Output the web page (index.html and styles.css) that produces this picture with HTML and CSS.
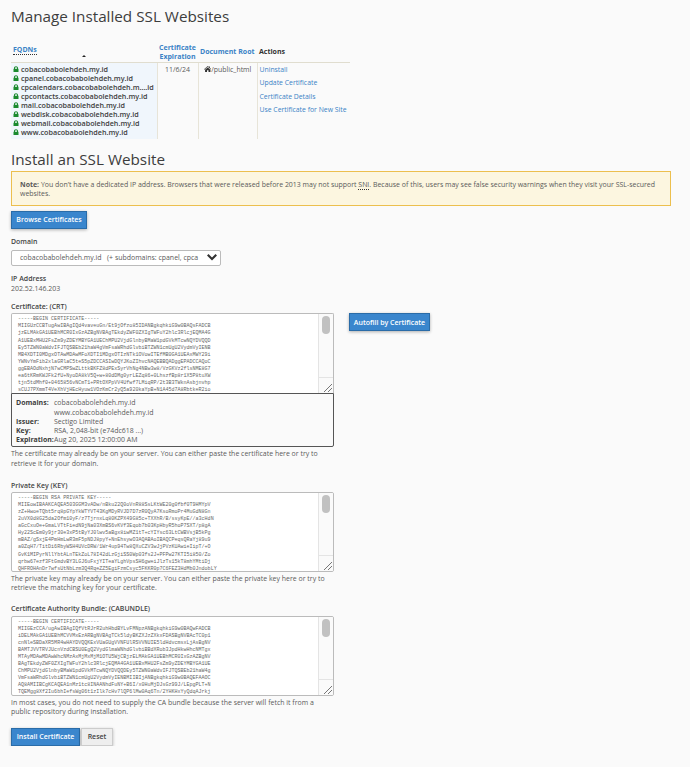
FILE: index.html
```html
<!DOCTYPE html>
<html>
  <head>
    <meta charset="utf-8">
    <title>Manage SSL Websites</title>
    <link rel="stylesheet" href="styles.css">
  </head>
  <body>
    <h1 class="title-top">Manage Installed SSL Websites</h1>
    <table class="sites">
      <thead>
        <tr>
          <th class="col-fqdn"><a class="abbr">FQDNs</a><svg class="sort" viewBox="0 0 6 3"><path d="M0 3L3 0L6 3Z"/></svg></th>
          <th class="col-exp"><a>Certificate Expiration</a></th>
          <th class="col-root"><a>Document Root</a></th>
          <th class="col-act">Actions</th>
        </tr>
      </thead>
      <tbody>
        <tr>
          <td class="fqdns">
            <div><svg class="lock" viewBox="0 0 12 12"><path d="M2 5V3.6C2 1.5 3.7 0 6 0s4 1.5 4 3.6V5h1v7H1V5zM4 5h4V3.6C8 2.6 7.1 2 6 2s-2 .6-2 1.6z"/></svg>cobacobabolehdeh.my.id</div>
            <div><svg class="lock" viewBox="0 0 12 12"><path d="M2 5V3.6C2 1.5 3.7 0 6 0s4 1.5 4 3.6V5h1v7H1V5zM4 5h4V3.6C8 2.6 7.1 2 6 2s-2 .6-2 1.6z"/></svg>cpanel.cobacobabolehdeh.my.id</div>
            <div><svg class="lock" viewBox="0 0 12 12"><path d="M2 5V3.6C2 1.5 3.7 0 6 0s4 1.5 4 3.6V5h1v7H1V5zM4 5h4V3.6C8 2.6 7.1 2 6 2s-2 .6-2 1.6z"/></svg>cpcalendars.cobacobabolehdeh.m….id</div>
            <div><svg class="lock" viewBox="0 0 12 12"><path d="M2 5V3.6C2 1.5 3.7 0 6 0s4 1.5 4 3.6V5h1v7H1V5zM4 5h4V3.6C8 2.6 7.1 2 6 2s-2 .6-2 1.6z"/></svg>cpcontacts.cobacobabolehdeh.my.id</div>
            <div><svg class="lock" viewBox="0 0 12 12"><path d="M2 5V3.6C2 1.5 3.7 0 6 0s4 1.5 4 3.6V5h1v7H1V5zM4 5h4V3.6C8 2.6 7.1 2 6 2s-2 .6-2 1.6z"/></svg>mail.cobacobabolehdeh.my.id</div>
            <div><svg class="lock" viewBox="0 0 12 12"><path d="M2 5V3.6C2 1.5 3.7 0 6 0s4 1.5 4 3.6V5h1v7H1V5zM4 5h4V3.6C8 2.6 7.1 2 6 2s-2 .6-2 1.6z"/></svg>webdisk.cobacobabolehdeh.my.id</div>
            <div><svg class="lock" viewBox="0 0 12 12"><path d="M2 5V3.6C2 1.5 3.7 0 6 0s4 1.5 4 3.6V5h1v7H1V5zM4 5h4V3.6C8 2.6 7.1 2 6 2s-2 .6-2 1.6z"/></svg>webmail.cobacobabolehdeh.my.id</div>
            <div><svg class="lock" viewBox="0 0 12 12"><path d="M2 5V3.6C2 1.5 3.7 0 6 0s4 1.5 4 3.6V5h1v7H1V5zM4 5h4V3.6C8 2.6 7.1 2 6 2s-2 .6-2 1.6z"/></svg>www.cobacobabolehdeh.my.id</div>
          </td>
          <td class="expiry">11/6/24</td>
          <td class="docroot"><svg class="home" viewBox="0 0 14 11"><path d="M7 0L9 1.7V.8h2v2.6L14 6l-.7.8L7 1.5.7 6.8 0 6zM7 2.6l5 4.2V11H8.4V7.6H5.6V11H2V6.8z"/></svg>/public_html</td>
          <td class="actions">
            <a>Uninstall</a>
            <a>Update Certificate</a>
            <a>Certificate Details</a>
            <a>Use Certificate for New Site</a>
          </td>
        </tr>
      </tbody>
    </table>

    <h1 class="title-install">Install an SSL Website</h1>
    <div class="note"><b>Note:</b> You don’t have a dedicated IP address. Browsers that were released before 2013 may not support <span class="abbr">SNI</span>. Because of this, users may see false security warnings when they visit your SSL-secured websites.</div>
    <button class="btn btn-browse">Browse Certificates</button>

    <label class="lbl lbl-domain">Domain</label>
    <div class="select">
      <span class="select-text">cobacobabolehdeh.my.id&nbsp;&nbsp;&nbsp;(+ subdomains: cpanel, cpca</span>
      <svg class="chevron" viewBox="0 0 10 7"><path d="M0 1.6L1.5 0L5 3.6L8.5 0L10 1.6L5 6.6Z"/></svg>
    </div>

    <label class="lbl lbl-ip">IP Address</label>
    <div class="ip">202.52.146.203</div>

    <label class="lbl lbl-crt">Certificate: (CRT)</label>
    <div class="cert-row">
      <div class="cert-col">
        <div class="area area-joined">
          <textarea class="area-text" readonly>-----BEGIN CERTIFICATE-----
MIIGUzCCBTugAwIBAgIQd4vaveuGn/Et9jOfzo85IDANBgkqhkiG9w0BAQsFADCB
jzELMAkGA1UEBhMCR0IxGzAZBgNVBAgTEkdyZWF0ZXIgTWFuY2hlc3RlcjEQMA4G
A1UEBxMHU2FsZm9yZDEYMBYGA1UEChMPU2VjdGlnbyBMaW1pdGVkMTcwNQYDVQQD
Ey5TZWN0aWdvIFJTQSBEb21haW4gVmFsaWRhdGlvbiBTZWN1cmUgU2VydmVyIENB
MB4XDTI0MDgxOTAwMDAwMFoXDTI1MDgxOTIzNTk1OVowITEfMB0GA1UEAxMWY29i
YWNvYmFib2xlaGRlaC5teS5pZDCCASIwDQYJKoZIhvcNAQEBBQADggEPADCCAQoC
ggEBAOdNxhjN7wCMPSwZLttkBKFZ8dPExSyrVhNg4NBw3w8/VzGKVz2flsNME8G7
ea6tKRmKWJFk2fU+NyoDA8kV5Q+w+80dDMg0yrLEZq86+0LhszfBp8r1X5P8tuXW
tjn5tdMhf0+0465856vNCmT1+PRtOXPpVV4Ufwf7LMiqRP/2t3B3TWknAsbjnvhp
sCUJ7PXmmT4VeXhVjHEcHyuw1VOzKmCr2yQ5a920kaYpB+N1A45d7A8RbtkeR2io</textarea>
          <div class="scroll"><div class="thumb"></div><div class="corner"><svg viewBox="0 0 8 8"><path d="M0 8L8 0M4 8L8 4"/></svg></div></div>
        </div>
        <dl class="details">
          <dt>Domains:</dt><dd>cobacobabolehdeh.my.id<br>www.cobacobabolehdeh.my.id</dd>
          <dt>Issuer:</dt><dd>Sectigo Limited</dd>
          <dt>Key:</dt><dd>RSA, 2,048-bit (e74dc618 ...)</dd>
          <dt>Expiration:</dt><dd>Aug 20, 2025 12:00:00 AM</dd>
        </dl>
      </div>
      <button class="btn btn-autofill">Autofill by Certificate</button>
    </div>
    <p class="help">The certificate may already be on your server. You can either paste the certificate here or try to retrieve it for your domain.</p>

    <label class="lbl lbl-key">Private Key (KEY)</label>
    <div class="area">
      <textarea class="area-text" readonly>-----BEGIN RSA PRIVATE KEY-----
MIIEowIBAAKCAQEA503GGM3vADw/nBku22Q0oVnR88SsLKtWE20g0fbf0T9HMYpV
zZ+HwoeTQbt5rq8pGYpYkWTYVT43KgMDyRVJD7D7zR0QyA7KsoRmoPr4MuGdN8Gn
2uVX0d8G25da2Ofm10yF/z7TjrnxLq80KZPX49G85c+TXXhR/B/ssyKpE//a3cHdN
aGcCxuOe+GmaLVTtFiedN9jNa03XmBS6vKVf3Eqob7b03KpHbyR5hoP7SXT/p8gA
Hy22ScEm0y9jr30e3xP5tByYJ0lwv5aBgx8iwMZ1tT+cYIYsc63LtCWBVsjB5kPg
mBAZ/gSxjE4PmHmLwR3mF5pNDJ8pyY+NnEhsywO3AQABAoIBAQCPeqsQRaYj89u9
a0ZqH7/TitDi6RbyWSH4UVcDRW/1Wr4up94Tw8QXuCZV3wJjPVzKUAwieIipT/+O
GvK1MIPyrNllYbtALnTEkZoL78I42dLzGjiSS0Wp03fs2J+PFPw27KTI5i850/Zo
qrbw67ezf3FtGmdvBY3LGJ6uFxjYITeaYLghVpsSH6gweiJlzTs15kT8mhYMtiDj
QHFROHAnDr7wfsUtNbLzm3Q4RqeZZ5EgiFzmCsyc5FKKR0p7C6FEZ3HdMb0JndobLY</textarea>
      <div class="scroll"><div class="thumb"></div><div class="corner"><svg viewBox="0 0 8 8"><path d="M0 8L8 0M4 8L8 4"/></svg></div></div>
    </div>
    <p class="help">The private key may already be on your server. You can either paste the private key here or try to retrieve the matching key for your certificate.</p>

    <label class="lbl lbl-ca">Certificate Authority Bundle: (CABUNDLE)</label>
    <div class="area">
      <textarea class="area-text" readonly>-----BEGIN CERTIFICATE-----
MIIGEzCCA/ugAwIBAgIQfVtRJrR2uhHbdBYLvFMNpzANBgkqhkiG9w0BAQwFADCB
iDELMAkGA1UEBhMCVVMxEzARBgNVBAgTCk5ldyBKZXJzZXkxFDASBgNVBAcTC0p1
cnNleSBDaXR5MR4wHAYDVQQKExVUaGUgVVNFUlRSVVNUIE5ldHdvcmsxLjAsBgNV
BAMTJVVTRVJUcnVzdCBSU0EgQ2VydGlmaWNhdGlvbiBBdXRob3JpdHkwHhcNMTgx
MTAyMDAwMDAwWhcNMzAxMjMxMjM1OTU5WjCBjzELMAkGA1UEBhMCR0IxGzAZBgNV
BAgTEkdyZWF0ZXIgTWFuY2hlc3RlcjEQMA4GA1UEBxMHU2FsZm9yZDEYMBYGA1UE
ChMPU2VjdGlnbyBMaW1pdGVkMTcwNQYDVQQDEy5TZWN0aWdvIFJTQSBEb21haW4g
VmFsaWRhdGlvbiBTZWN1cmUgU2VydmVyIENBMIIBIjANBgkqhkiG9w0BAQEFAAOC
AQ8AMIIBCgKCAQEA1nMz1tc8INAANhdFuNY+B6I/x0HuMjDJsGz99J/LEpgPLT+N
TQEMgg8Xf2Iu6bhIefsWg06t1zIlk7cHv7lQP6lMw0Aq6Tn/2YHKHxYyQdqAJrkj</textarea>
      <div class="scroll"><div class="thumb"></div><div class="corner"><svg viewBox="0 0 8 8"><path d="M0 8L8 0M4 8L8 4"/></svg></div></div>
    </div>
    <p class="help">In most cases, you do not need to supply the CA bundle because the server will fetch it from a public repository during installation.</p>

    <div class="form-actions">
      <button class="btn btn-install">Install Certificate</button>
      <button class="btn-reset">Reset</button>
    </div>
  </body>
</html>
```

FILE: styles.css
```css
body {
  margin: 0;
  padding: 0 11px;
  background: #fafafa;
  color: #5a5a5a;
  font-family: "Open Sans", sans-serif;
  font-size: 6.96px;
  line-height: 9.2px;
  overflow: hidden;
}
a {
  color: #3b83c6;
}
h1 {
  margin: 0;
  font-weight: 400;
  font-size: 15.25px;
  line-height: 20px;
  color: #3d3d3d;
}
.title-top {
  padding-top: 6px;
}
.abbr {
  border-bottom: 1px dotted #333;
}

/* installed sites table */
.sites {
  border-collapse: collapse;
  margin-top: 16px;
  width: 339px;
  table-layout: fixed;
}
.sites th {
  box-sizing: border-box;
  height: 20px;
  padding: 0 0 0 2px;
  border-bottom: 1px solid #e0ddcf;
  font-weight: 700;
  font-size: 7px;
  line-height: 9.2px;
  text-align: left;
  position: relative;
  color: #333;
}
.sites td {
  box-sizing: border-box;
  height: 76px;
  padding: 2px;
  vertical-align: top;
  border-right: 1px solid #e7e4d8;
}
.sites td:last-child {
  border-right: 0;
}
.col-fqdn { width: 146px; }
.col-exp { width: 41px; }
.col-root { width: 59px; }
.sites .col-fqdn {
  padding-bottom: 5px;
}
.sites .col-exp {
  text-align: center;
  padding: 0;
}
.sort {
  position: absolute;
  left: 71px;
  top: 13px;
  width: 4px;
  height: 2px;
  fill: #222;
}
.sites .fqdns {
  background: #f0f6fc;
  font-weight: 600;
  color: #3d3d3d;
  font-size: 7.2px;
}
.fqdns div {
  height: 9px;
  line-height: 9px;
  white-space: nowrap;
  display: flex;
  align-items: center;
}
.lock {
  width: 6px;
  height: 6.5px;
  fill: #1a8a2e;
  margin-right: 2px;
  flex: none;
}
.expiry {
  text-align: center;
}
.docroot {
  text-align: center;
  white-space: nowrap;
}
.home {
  width: 7.5px;
  height: 6px;
  fill: #333;
}
.actions a {
  display: block;
  height: 13.6px;
  line-height: 9px;
  font-size: 6.85px;
  white-space: nowrap;
}

/* install form */
.title-install {
  margin-top: 10px;
}
.note {
  margin-top: 2px;
  width: 660px;
  height: 35px;
  box-sizing: border-box;
  padding: 8px 8px 0;
  line-height: 9.6px;
  background: #fcf6e0;
  border: 1px solid #ecbf4e;
}
.note b {
  font-weight: 700;
}
.btn {
  display: block;
  height: 18px;
  padding: 0;
  border: 1px solid #2a6ca8;
  background: #3a86cd;
  color: #fff;
  font: 600 7px "Open Sans", sans-serif;
  box-shadow: 0 1px 3px rgba(0, 0, 0, .3);
}
.btn-browse {
  margin-top: 5px;
  width: 76px;
}
.lbl {
  display: block;
  font-weight: 600;
  color: #444;
}
.lbl-domain { margin-top: 8px; }
.select {
  margin-top: 4px;
  width: 210px;
  height: 16px;
  box-sizing: border-box;
  display: flex;
  align-items: center;
  padding: 0 3px 0 8px;
  background: #fff;
  border: 1px solid #bbb;
  border-radius: 2px;
}
.select-text {
  width: 179px;
  overflow: hidden;
  white-space: nowrap;
}
.chevron {
  width: 10px;
  height: 7px;
  margin-left: auto;
  fill: #333;
}
.lbl-ip { margin-top: 8px; }
.ip { margin-top: 1px; }
.lbl-crt { margin-top: 9px; }
.lbl-key { margin-top: 13px; }
.lbl-ca { margin-top: 12px; }

.cert-row {
  display: flex;
  align-items: flex-start;
  margin-top: 2px;
}
.cert-col {
  width: 323px;
}
.btn-autofill {
  margin-left: 15px;
  width: 81px;
}
.area {
  display: flex;
  width: 323px;
  height: 80px;
  margin-top: 2px;
  box-sizing: border-box;
  background: #fff;
  border: 1px solid #bbb;
  border-radius: 2px;
  overflow: hidden;
}
.area-joined {
  margin-top: 0;
  border-bottom: 0;
  border-radius: 2px 2px 0 0;
}
.area-text {
  flex: 1;
  min-width: 0;
  margin: 0;
  padding: 2px 0 0 6px;
  border: 0;
  outline: 0;
  resize: none;
  overflow: hidden;
  white-space: pre;
  background: transparent;
  color: #666;
  font-family: "Liberation Mono", monospace;
  font-size: 5.03px;
  line-height: 7.08px;
}
.scroll {
  flex: none;
  width: 14px;
  display: flex;
  flex-direction: column;
  border-left: 1px solid #e4e4e4;
  background: #fafafa;
}
.thumb {
  width: 8px;
  height: 18px;
  margin: 2px 0 0 3px;
  background: #c1c1c1;
  border-radius: 4px;
}
.corner {
  margin-top: auto;
  height: 15px;
  border-top: 1px solid #e4e4e4;
  display: flex;
  justify-content: flex-end;
  align-items: flex-end;
}
.corner svg {
  width: 8px;
  height: 8px;
  margin: 0 1px 1px 0;
  stroke: #555;
  stroke-width: .8;
}
.details {
  margin: 0;
  width: 323px;
  height: 54px;
  box-sizing: border-box;
  padding: 4px 4px 0;
  display: grid;
  grid-template-columns: 38px 1fr;
  grid-auto-rows: min-content;
  background: #fafafa;
  border: 1px solid #555;
  border-radius: 0 0 2px 2px;
  color: #5a5a5a;
}
.details dt {
  font-weight: 700;
  color: #3d3d3d;
}
.details dd {
  margin: 0;
}
.help {
  margin: 2px 0 0;
  width: 321px;
}
.form-actions {
  display: flex;
  margin-top: 12px;
  gap: 1px;
}
.btn-install {
  width: 69px;
}
.btn-reset {
  width: 32px;
  height: 18px;
  padding: 0;
  border: 1px solid #ccc;
  background: #eee;
  color: #444;
  font: 600 7px "Open Sans", sans-serif;
  box-shadow: 0 1px 3px rgba(0, 0, 0, .25);
}
```
